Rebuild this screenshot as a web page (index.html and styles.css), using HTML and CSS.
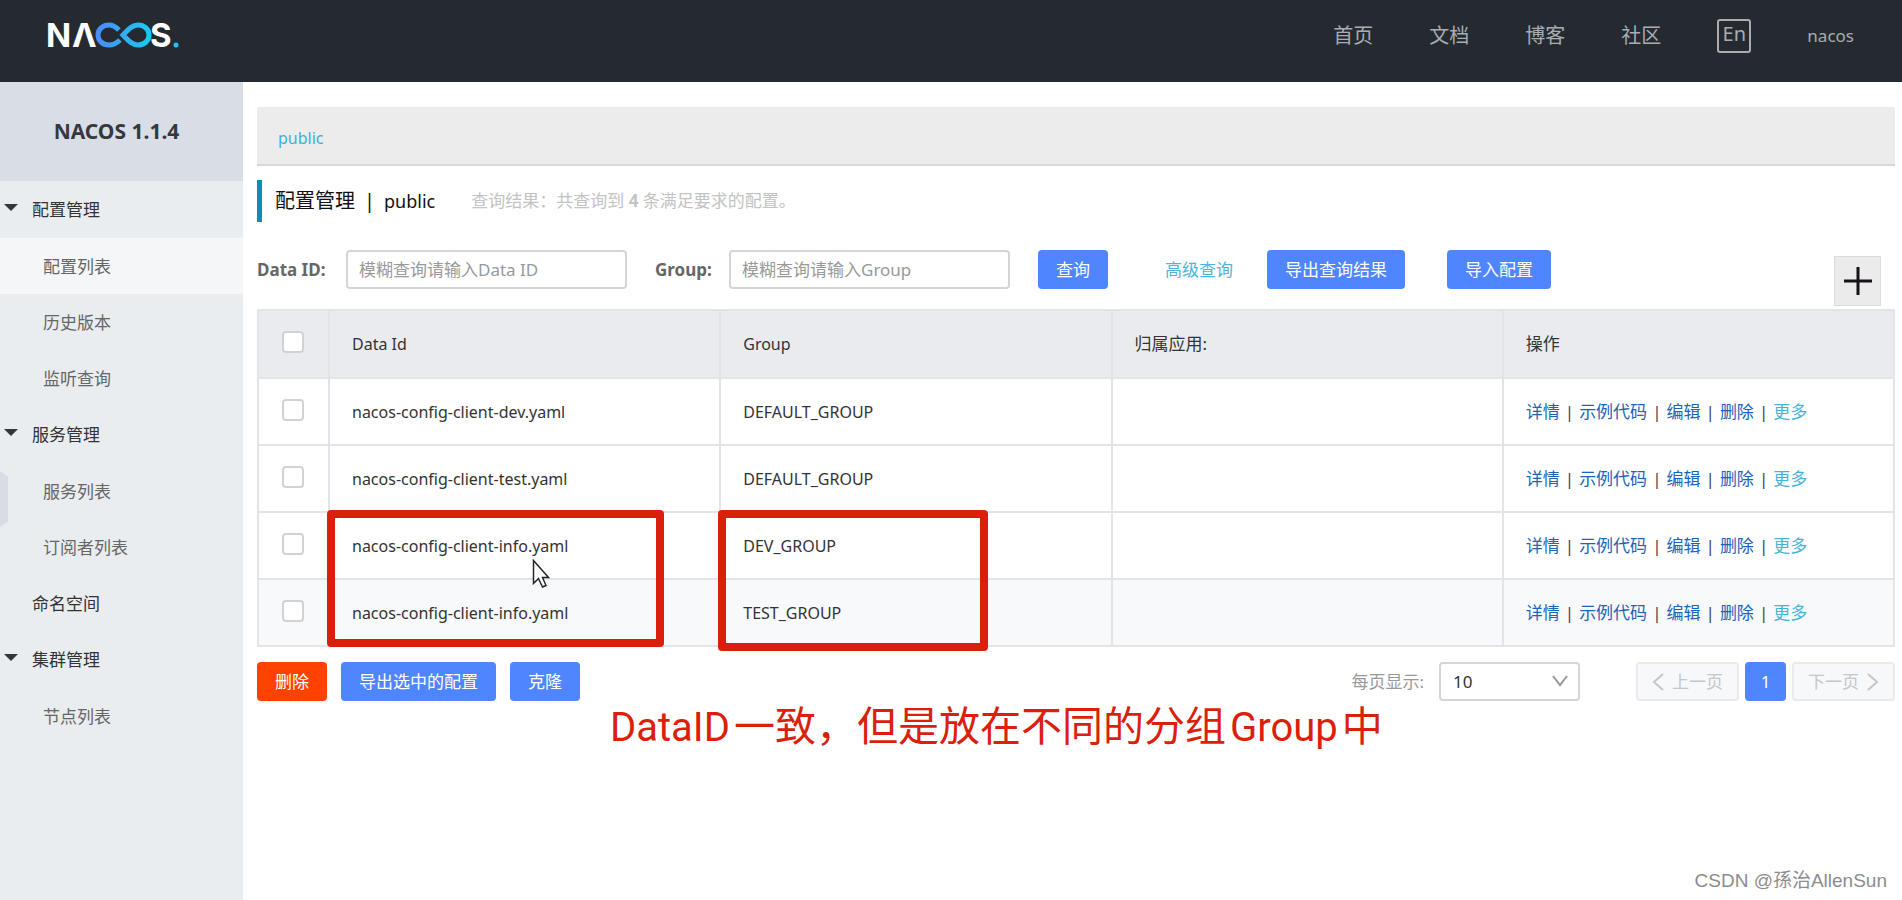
FILE: index.html
```html
<!DOCTYPE html>
<html lang="zh-CN">
<head>
<meta charset="utf-8">
<title>Nacos</title>
<link rel="stylesheet" href="styles.css">
</head>
<body>
<header class="topbar">
  <a class="logo" href="#" aria-label="Nacos">
    <svg width="146" height="50" viewBox="-6 -10 146 50">
      <defs>
        <linearGradient id="loop" x1="0" x2="1" y1="0" y2="0">
          <stop offset="0" stop-color="#4a8df8"/>
          <stop offset="1" stop-color="#1cc8ee"/>
        </linearGradient>
      </defs>
      <text class="logo-text" x="-2" y="27">N</text>
      <text class="logo-text" x="24" y="27">Λ</text>
      <text class="logo-text" x="102" y="27">S</text>
      <path d="M72 20 C68 24 65 25 61 25 C54 25 50 20 50 15 C50 9 55 5 61 5 C65 5 68 7 71 10 M75 15 C79 11 83 5 90 5 C96 5 101 9 101 15 C101 21 96 25 90 25 C83 25 79 19 75 15 Z" fill="none" stroke="url(#loop)" stroke-width="5"/>
      <circle cx="128" cy="25" r="2.500" fill="#1cc8ee"/>
    </svg>
  </a>
  <nav class="topnav">
    <a href="#">首页</a>
    <a href="#">文档</a>
    <a href="#">博客</a>
    <a href="#">社区</a>
    <button class="lang" type="button">En</button>
    <a class="user" href="#">nacos</a>
  </nav>
</header>
<div class="layout">
  <aside class="sidebar">
    <h1 class="version">NACOS 1.1.4</h1>
    <nav class="menu">
      <a class="menu-item group open" href="#">配置管理</a>
      <a class="menu-item sub active" href="#">配置列表</a>
      <a class="menu-item sub" href="#">历史版本</a>
      <a class="menu-item sub" href="#">监听查询</a>
      <a class="menu-item group" href="#">服务管理</a>
      <a class="menu-item sub" href="#">服务列表</a>
      <a class="menu-item sub" href="#">订阅者列表</a>
      <a class="menu-item plain" href="#">命名空间</a>
      <a class="menu-item group" href="#">集群管理</a>
      <a class="menu-item sub" href="#">节点列表</a>
    </nav>
    <button class="collapse" type="button" aria-label="收起菜单"></button>
  </aside>
  <main class="content">
    <div class="namespace"><a href="#">public</a></div>
    <div class="heading">
      <h2>配置管理<span class="bar">|</span><span class="space">public</span></h2>
      <p>查询结果：共查询到 <strong>4</strong> 条满足要求的配置。</p>
    </div>
    <form class="search">
      <label for="data-id">Data ID:</label>
      <input class="field" id="data-id" type="text" placeholder="模糊查询请输入Data ID">
      <label class="group-label" for="group">Group:</label>
      <input class="field" id="group" type="text" placeholder="模糊查询请输入Group">
      <button class="btn query" type="button">查询</button>
      <a class="advanced" href="#">高级查询</a>
      <button class="btn export" type="button">导出查询结果</button>
      <button class="btn" type="button">导入配置</button>
      <button class="add" type="button" aria-label="新建配置">
        <svg width="28" height="28" viewBox="0 0 28 28"><path d="M14 0V28M0 14H28" stroke="#161218" stroke-width="3"/></svg>
      </button>
    </form>
    <div class="table-wrap">
      <table class="configs">
        <thead>
          <tr><th class="check"><input type="checkbox" aria-label="全选"></th><th class="latin">Data Id</th><th class="latin">Group</th><th>归属应用:</th><th>操作</th></tr>
        </thead>
        <tbody>
          <tr><td class="check"><input type="checkbox" aria-label="选择第1行"></td><td class="latin">nacos-config-client-dev.yaml</td><td class="latin">DEFAULT_GROUP</td><td></td><td class="actions"><a href="#">详情</a><i>|</i><a href="#">示例代码</a><i>|</i><a href="#">编辑</a><i>|</i><a href="#">删除</a><i>|</i><a class="more" href="#">更多</a></td></tr>
          <tr><td class="check"><input type="checkbox" aria-label="选择第2行"></td><td class="latin">nacos-config-client-test.yaml</td><td class="latin">DEFAULT_GROUP</td><td></td><td class="actions"><a href="#">详情</a><i>|</i><a href="#">示例代码</a><i>|</i><a href="#">编辑</a><i>|</i><a href="#">删除</a><i>|</i><a class="more" href="#">更多</a></td></tr>
          <tr><td class="check"><input type="checkbox" aria-label="选择第3行"></td><td class="latin">nacos-config-client-info.yaml</td><td class="latin">DEV_GROUP</td><td></td><td class="actions"><a href="#">详情</a><i>|</i><a href="#">示例代码</a><i>|</i><a href="#">编辑</a><i>|</i><a href="#">删除</a><i>|</i><a class="more" href="#">更多</a></td></tr>
          <tr class="hover"><td class="check"><input type="checkbox" aria-label="选择第4行"></td><td class="latin">nacos-config-client-info.yaml</td><td class="latin">TEST_GROUP</td><td></td><td class="actions"><a href="#">详情</a><i>|</i><a href="#">示例代码</a><i>|</i><a href="#">编辑</a><i>|</i><a href="#">删除</a><i>|</i><a class="more" href="#">更多</a></td></tr>
        </tbody>
      </table>
      <div class="mark mark-id"></div>
      <div class="mark mark-group"></div>
      <svg class="cursor" width="18" height="30" viewBox="0 0 18 30"><path d="M1.500 1.500V24.500L6.500 19.500L10.500 28L14 26.500L10.500 18.500H16.500Z" fill="#fff" stroke="#26262c" stroke-width="1.500"/></svg>
    </div>
    <div class="footer">
      <button class="btn danger" type="button">删除</button>
      <button class="btn" type="button">导出选中的配置</button>
      <button class="btn" type="button">克隆</button>
      <div class="pager">
        <label for="page-size">每页显示:</label>
        <span class="select-box">
          <select id="page-size"><option>10</option></select>
          <svg width="16" height="12" viewBox="0 0 16 12"><path d="M1 1L8 10L15 1" fill="none" stroke="#999" stroke-width="2"/></svg>
        </span>
        <button class="page prev" type="button" disabled><svg width="12" height="18" viewBox="0 0 12 18"><path d="M11 1L2 9L11 17" fill="none" stroke="#c4c6ca" stroke-width="2"/></svg>上一页</button>
        <button class="page current" type="button">1</button>
        <button class="page next" type="button" disabled>下一页<svg width="12" height="18" viewBox="0 0 12 18"><path d="M1 1L10 9L1 17" fill="none" stroke="#c4c6ca" stroke-width="2"/></svg></button>
      </div>
    </div>
    <p class="note">DataID<span>一致，但是放在不同的分组</span>Group<span>中</span></p>
    <p class="watermark">CSDN @孫治AllenSun</p>
  </main>
</div>
</body>
</html>
```
FILE: styles.css
```css
*, *::before { box-sizing: border-box; }
body {
  margin: 0;
  min-height: 100vh;
  display: flex;
  flex-direction: column;
  background: #fff;
  color: #333;
  font: 17px/24px "Noto Sans", "Noto Sans CJK SC", sans-serif;
}
a { color: inherit; text-decoration: none; }
button, input, select { font: inherit; }
h1, h2, p { margin: 0; }

.topbar {
  height: 82px;
  padding: 0 48px 0 42px;
  display: flex;
  justify-content: space-between;
  align-items: flex-start;
  background: #242a30;
}
.logo { padding-top: 10px; }
.logo svg { display: block; }
.logo-text { font: 700 33px "Inter", sans-serif; fill: #fff; }
.topnav {
  padding-top: 19px;
  display: flex;
  align-items: center;
  gap: 56px;
  color: #a9acb0;
  font-size: 20px;
}
.lang {
  width: 34px;
  height: 34px;
  padding: 0 0 4px;
  border: 2px solid #a9acb0;
  border-radius: 3px;
  background: none;
  color: inherit;
  line-height: 26px;
}
.user { font-size: 17px; }

.layout { flex: 1; display: flex; }
.sidebar {
  position: relative;
  flex: none;
  width: 243px;
  background: #e9edf0;
}
.version {
  height: 99px;
  padding-right: 10px;
  background: #d9dde5;
  color: #35383d;
  font-size: 21px;
  font-weight: 700;
  line-height: 99px;
  text-align: center;
}
.menu { display: flex; flex-direction: column; }
.menu-item {
  height: 56px;
  padding-left: 43px;
  color: #666;
  line-height: 57px;
}
.menu-item.plain { padding-left: 32px; color: #333; }
.menu-item.group { height: 57px; display: flex; padding-left: 4px; color: #333; }
.menu-item.group::before {
  content: "";
  width: 14px;
  margin: 23px 14px 0 0;
  border: 7px solid transparent;
  border-top-color: #33373d;
  border-bottom: 0;
  align-self: flex-start;
}
.menu-item.active { background: #f4f6f8; }
.collapse {
  position: absolute;
  left: 0;
  top: 389px;
  width: 8px;
  height: 56px;
  padding: 0;
  border: 0;
  background: #d8dce4;
  clip-path: polygon(0 0, 100% 10%, 100% 90%, 0 100%);
}

.content { flex: 1; min-width: 0; padding: 25px 7px 0 14px; position: relative; }
.namespace {
  height: 59px;
  padding: 19px 21px 0;
  border-bottom: 2px solid #d5d8dc;
  background: #ececec;
  color: #3bb0d9;
  font-size: 16px;
}
.heading {
  height: 42px;
  margin-top: 14px;
  border-left: 5px solid #1289bd;
  padding-left: 13px;
  display: flex;
  align-items: center;
  gap: 36px;
}
.heading h2 { color: #111; font-size: 20px; font-weight: 400; }
.bar { margin: 0 9px; }
.space { font-size: 18px; }
.heading p { color: #c3c3c3; }

.search {
  margin-top: 28px;
  height: 59px;
  display: flex;
  align-items: flex-start;
}
.search label { width: 89px; color: #666; font-weight: 700; line-height: 40px; }
.search .group-label { width: 74px; margin-left: 28px; }
.field {
  width: 281px;
  height: 39px;
  padding: 0 11px;
  border: 2px solid #d3d5da;
  border-radius: 4px;
  background: #fff;
}
.field::placeholder { color: #999; opacity: 1; }
.btn {
  height: 39px;
  padding: 0 18px;
  border: 0;
  border-radius: 4px;
  background: #4f86ff;
  color: #fff;
  white-space: nowrap;
}
.query { margin-left: 28px; }
.advanced { margin: 0 34px 0 57px; color: #4db6da; line-height: 40px; }
.export { margin-right: 42px; }
.add {
  width: 47px;
  height: 50px;
  margin: 6px 14px 0 auto;
  padding: 0;
  display: grid;
  place-items: center;
  border: 1px solid #dcdcdc;
  background: #ebebeb;
}

.table-wrap { position: relative; }
.configs {
  width: 100%;
  border-collapse: collapse;
  table-layout: fixed;
  border: 2px solid #e1e4e8;
}
.configs th, .configs td {
  height: 67px;
  padding: 0 22px;
  border: 2px solid #e1e4e8;
  font-weight: 400;
  text-align: left;
}
.configs th { height: 68px; background: #e9ebef; }
.configs .latin { font-size: 16px; }
.configs .check { width: 71px; padding: 0 2px 6px 0; text-align: center; }
.check input {
  appearance: none;
  width: 22px;
  height: 22px;
  margin: 0;
  border: 2px solid #d0d2d9;
  border-radius: 4px;
  background: #fff;
  vertical-align: middle;
}
.hover { background: #f8f9fa; }
.configs .actions { color: #1c64b8; white-space: nowrap; }
.actions i { margin: 0 5px; color: #445; font-style: normal; }
.actions .more { color: #45b4d8; }
.mark {
  position: absolute;
  border: 8px solid #db1f0d;
  border-radius: 4px;
}
.mark-id { left: 70px; top: 201px; width: 337px; height: 137px; }
.mark-group { left: 461px; top: 201px; width: 270px; height: 141px; }
.cursor { position: absolute; left: 275px; top: 250px; }

.footer { margin-top: 15px; display: flex; gap: 14px; }
.danger { background: #ff4200; }
.pager { margin-left: auto; display: flex; align-items: center; }
.pager label { margin-right: 15px; color: #999; }
.select-box { position: relative; margin-right: 56px; }
.select-box select {
  appearance: none;
  display: block;
  width: 141px;
  height: 39px;
  padding: 0 12px;
  border: 2px solid #d3d5da;
  border-radius: 4px;
  background: #fff;
  color: #333;
}
.select-box svg { position: absolute; right: 12px; top: 13px; pointer-events: none; }
.page {
  width: 103px;
  height: 39px;
  padding: 0;
  display: flex;
  align-items: center;
  justify-content: center;
  gap: 8px;
  border: 2px solid #e8eaed;
  border-radius: 4px;
  background: #f7f8fa;
  color: #c4c6ca;
}
.page.current {
  width: 41px;
  margin: 0 6px;
  border: 0;
  background: #4f86ff;
  color: #fff;
}

.note {
  margin: 1px 0 0 353px;
  color: #db1f0d;
  font: 40px/50px Roboto, "Noto Sans CJK SC", sans-serif;
}
.note span { margin: 0 4px; font-size: 41px; }
.watermark {
  position: absolute;
  right: 15px;
  bottom: 7px;
  color: #8c8c8c;
  font: 19px/24px "Liberation Sans", "Noto Sans CJK TC", sans-serif;
}
```
